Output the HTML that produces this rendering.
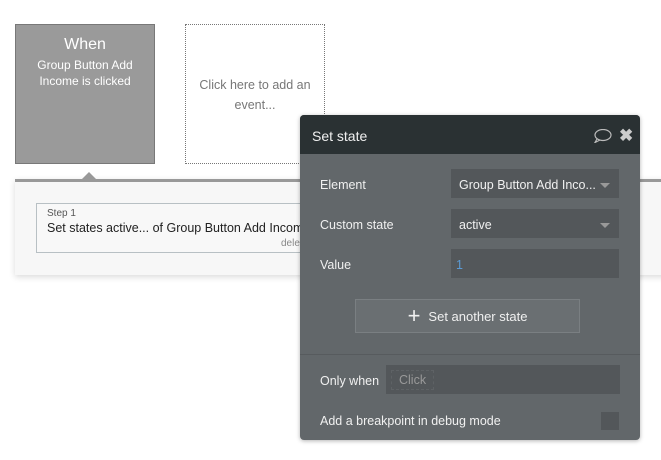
<!DOCTYPE html>
<html><head><style>
*{margin:0;padding:0;box-sizing:border-box}
body{width:661px;height:460px;background:#fff;position:relative;overflow:hidden;font-family:"Liberation Sans",sans-serif;}
.a{position:absolute}
</style></head><body>
<div class="a" style="left:15px;top:24px;width:140px;height:140px;background:#9a9a9a;border:1px solid #787878;color:#fff;text-align:center">
<div style="font-size:16px;margin-top:11px">When</div>
<div style="font-size:12px;line-height:16px;margin-top:3px">Group Button Add<br>Income is clicked</div></div>
<div class="a" style="left:185px;top:24px;width:140px;height:140px;border:1px dotted #777;color:#777;text-align:center;font-size:12.5px;line-height:20px;padding-top:50px">Click here to add an<br>event...</div>
<div class="a" style="left:15px;top:179px;width:660px;height:96px;background:#f7f7f7;border-top:3px solid #999;box-shadow:0 2px 6px rgba(0,0,0,.15)"></div>
<div class="a" style="left:82px;top:172px;width:0;height:0;border-left:7px solid transparent;border-right:7px solid transparent;border-bottom:7px solid #999"></div>
<div class="a" style="left:36px;top:203px;width:300px;height:50px;border:1px solid #b8c0c4;background:#f8f8f8;overflow:hidden">
<div style="font-size:10px;color:#555;margin:4px 0 0 10px">Step 1</div>
<div style="font-size:12.5px;color:#222;margin:2px 0 0 10px;white-space:nowrap">Set states active... of Group Button Add Income</div>
<div style="font-size:10px;color:#888;position:absolute;left:244px;top:34px">delete</div></div>
<div class="a" style="left:300px;top:115px;width:340px;height:325px;background:#62676a;border-radius:4px;box-shadow:0 1px 4px rgba(0,0,0,.3);overflow:hidden;color:#f0f0f0;font-size:12.5px">
<div style="height:39px;background:#2a3133;font-size:14px;padding:13px 0 0 12px">Set state</div>
<svg class="a" style="left:293px;top:14px" width="20" height="14" viewBox="0 0 20 14"><ellipse cx="10" cy="6" rx="8" ry="5.5" fill="none" stroke="#bbb" stroke-width="1.2"/><path d="M4 10 L2 13.5 L7 11" fill="none" stroke="#bbb" stroke-width="1.2"/></svg>
<div class="a" style="left:319px;top:11px;font-size:17px;font-weight:bold;color:#ccc">✖</div>
<div class="a" style="left:20px;top:63px">Element</div>
<div class="a" style="left:151px;top:54px;width:168px;height:29px;background:#53575a;padding:9px 0 0 8px;white-space:nowrap">Group Button Add Inco...</div>
<div class="a" style="left:20px;top:103px">Custom state</div>
<div class="a" style="left:151px;top:94px;width:168px;height:29px;background:#53575a;padding:9px 0 0 8px">active</div>
<div class="a" style="left:300px;top:108px;border-left:5px solid transparent;border-right:5px solid transparent;border-top:5px solid #999"></div>
<div class="a" style="left:300px;top:68px;border-left:5px solid transparent;border-right:5px solid transparent;border-top:5px solid #999"></div>
<div class="a" style="left:20px;top:143px">Value</div>
<div class="a" style="left:151px;top:134px;width:168px;height:29px;background:#53575a;padding:9px 0 0 5px;color:#5b9bd5">1</div>
<div class="a" style="left:55px;top:184px;width:225px;height:34px;background:#6a6f72;border:1px solid #7a7f82;display:flex;align-items:center;justify-content:center;font-size:13px"><span style="font-size:22px;margin-right:8px;line-height:20px">+</span>Set another state</div>
<div class="a" style="left:0;top:239px;width:340px;height:1px;background:#575b5e"></div>
<div class="a" style="left:20px;top:259px">Only when</div>
<div class="a" style="left:86px;top:250px;width:234px;height:29px;background:#53575a"><span style="position:absolute;left:5px;top:5px;border:1px dashed #5e6265;padding:2px 7px;color:#999">Click</span></div>
<div class="a" style="left:20px;top:299px">Add a breakpoint in debug mode</div>
<div class="a" style="left:301px;top:297px;width:18px;height:18px;background:#53575a"></div>
</div>
</body></html>
